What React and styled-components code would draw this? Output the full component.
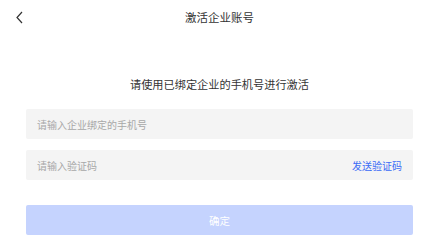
import React from 'react';
import styled, { createGlobalStyle } from 'styled-components';

const GlobalStyle = createGlobalStyle`
  body {
    margin: 0;
    background: #ffffff;
    font-family: "Noto Sans CJK SC", "Noto Sans", sans-serif;
  }
`;

const Page = styled.div`
  width: 439px;
  height: 243px;
  background: #ffffff;
`;

const Header = styled.div`
  height: 34px;
  display: flex;
  align-items: center;
  justify-content: center;
  position: relative;
`;

const BackButton = styled.button`
  position: absolute;
  left: 13px;
  top: 9px;
  width: 12px;
  height: 16px;
  padding: 0;
  border: none;
  background: none;
  display: flex;
  align-items: center;
  justify-content: center;
`;

const Title = styled.div`
  font-size: 11.5px;
  color: #333333;
  line-height: 16px;
`;

const Main = styled.div`
  padding: 0 26px;
  display: flex;
  flex-direction: column;
`;

const Subtitle = styled.div`
  margin-top: 42px;
  text-align: center;
  font-size: 11.2px;
  line-height: 16px;
  color: #333333;
`;

const Field = styled.div`
  margin-top: ${(p) => p.gap}px;
  height: 30px;
  background: #f4f4f4;
  border-radius: 2px;
  display: flex;
  align-items: center;
  padding: 0 11px;
`;

const Input = styled.input`
  flex: 1;
  min-width: 0;
  border: none;
  outline: none;
  background: transparent;
  padding: 0;
  font-family: inherit;
  font-size: 10px;
  color: #333333;
  &::placeholder {
    color: #a8a8a8;
  }
`;

const SendCode = styled.span`
  font-size: 10px;
  color: #3c6cf6;
`;

const Submit = styled.button`
  margin-top: 25px;
  height: 30px;
  border: none;
  border-radius: 2px;
  background: #c5d3fe;
  color: #ffffff;
  font-family: inherit;
  font-size: 10.5px;
`;

export default function App() {
  return (
    <Page>
      <GlobalStyle />
      <Header>
        <BackButton>
          <svg width="7" height="13" viewBox="0 0 7 13">
            <path d="M6 1 L1 6.5 L6 12" fill="none" stroke="#333" strokeWidth="1.2" />
          </svg>
        </BackButton>
        <Title>激活企业账号</Title>
      </Header>
      <Main>
        <Subtitle>请使用已绑定企业的手机号进行激活</Subtitle>
        <Field gap={17}>
          <Input placeholder="请输入企业绑定的手机号" />
        </Field>
        <Field gap={11}>
          <Input placeholder="请输入验证码" />
          <SendCode>发送验证码</SendCode>
        </Field>
        <Submit>确定</Submit>
      </Main>
    </Page>
  );
}
